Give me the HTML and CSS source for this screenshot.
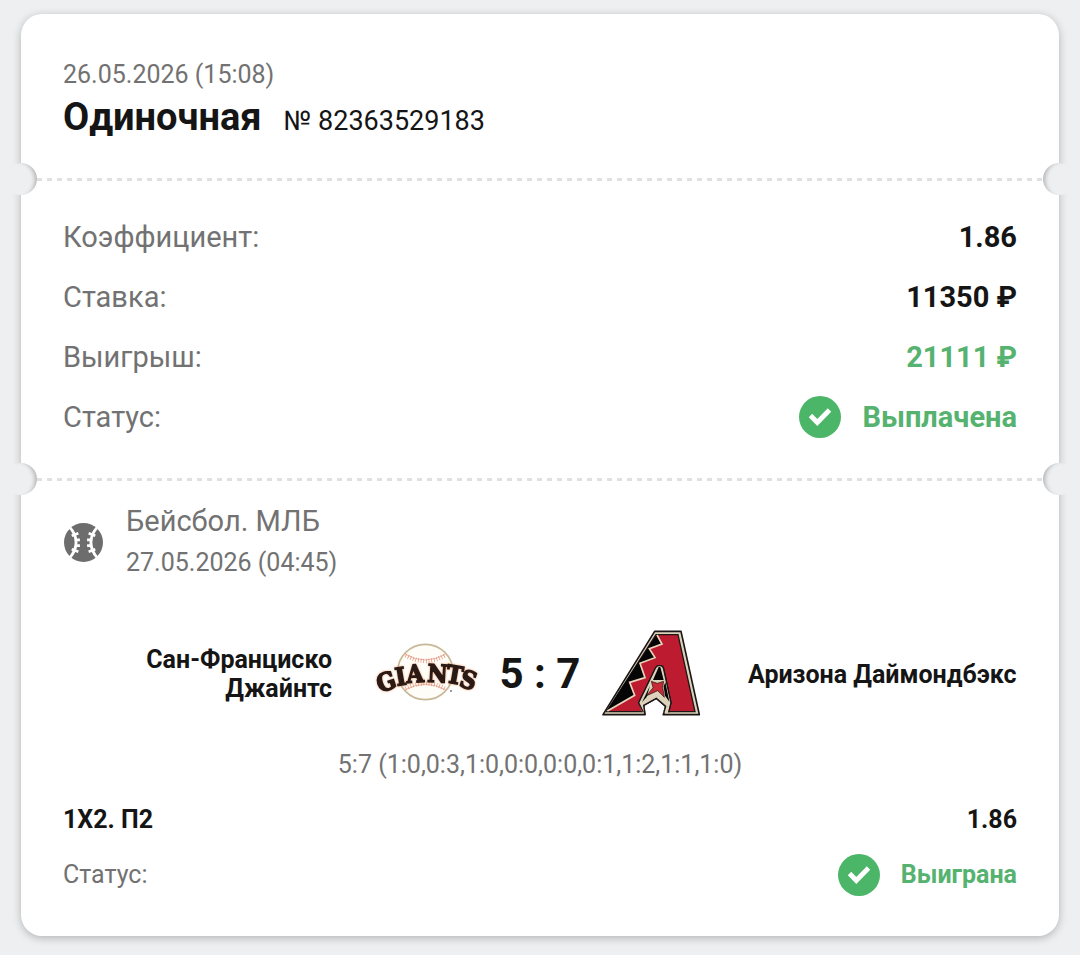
FILE: index.html
```html
<!DOCTYPE html>
<html lang="ru">
<head>
    <meta charset="UTF-8">
    <meta name="viewport" content="width=device-width, initial-scale=1">
    <title>Одиночная № 82363529183</title>
    <link rel="stylesheet" href="styles.css">
</head>
<body>
    <main class="ticket">
        <header class="ticket-header">
            <div class="date">26.05.2026 (15:08)</div>
            <div class="title-row">
                <h1>Одиночная</h1>
                <span class="number">№ 82363529183</span>
            </div>
        </header>

        <div class="divider"></div>

        <dl class="summary">
            <div class="row">
                <dt>Коэффициент:</dt>
                <dd>1.86</dd>
            </div>
            <div class="row">
                <dt>Ставка:</dt>
                <dd>11350 ₽</dd>
            </div>
            <div class="row">
                <dt>Выигрыш:</dt>
                <dd class="green">21111 ₽</dd>
            </div>
            <div class="row">
                <dt>Статус:</dt>
                <dd class="green status">
                    <svg class="check" viewBox="0 0 42 42" aria-hidden="true">
                        <circle cx="21" cy="21" r="21" fill="#4bb568"/>
                        <path d="M11.500 19.500l6.800 7L30.500 14" fill="none" stroke="#fff" stroke-width="4.800"/>
                    </svg>
                    Выплачена
                </dd>
            </div>
        </dl>

        <div class="divider"></div>

        <section class="event">
            <div class="league">
                <svg class="ball" viewBox="0 0 40 40" aria-hidden="true">
                    <circle cx="20" cy="20" r="19" fill="#6d6d6d"/>
                    <g fill="none" stroke="#fff">
                        <path d="M6 4.500C15 14 15 26 6 35.500M34 4.500C25 14 25 26 34 35.500" stroke-width="2.800"/>
                        <path d="M8.500 13.500l6.500-2.500M12 17.500h4.500M12 23h4.500M8.500 26.500l6.500 2.500M31.500 13.500l-6.500-2.500M28 17.500h-4.500M28 23h-4.500M31.500 26.500l-6.500 2.500" stroke-width="2.600"/>
                    </g>
                </svg>
                <div>
                    <h2>Бейсбол. МЛБ</h2>
                    <div class="date">27.05.2026 (04:45)</div>
                </div>
            </div>

            <div class="match">
                <div class="team home">Сан-Франциско Джайнтс</div>
                <div class="board">
                    <svg class="logo" viewBox="22 0 330 256" role="img" aria-label="Giants">
                        <circle cx="179" cy="122" r="83" fill="#fffdf8" stroke="#c8b897" stroke-width="5"/>
                        <g fill="none" stroke="#e38a72">
                            <path d="M119 69q60 34 120 0M119 175q60-32 120 0" stroke-width="2"/>
                            <path d="M120 72q59 34 118 0M120 172q59-32 118 0" stroke-width="13" stroke-dasharray="2 6"/>
                        </g>
                        <text class="giants" x="42 94 124 184 238 278" y="184 164 155 151 152 163" rotate="-18 -10 -4 3 10 18">GIANTS</text>
                        <circle cx="256" cy="179" r="3" fill="#777"/>
                    </svg>
                    <div class="score">5 : 7</div>
                    <svg class="logo" viewBox="21 31 330 256" role="img" aria-label="Diamondbacks">
                        <path d="M194 31h79l55 250H220l7-25-28-24-38 21 4 28H39z" fill="#ddd2ba" stroke="#1c1717" stroke-width="5" stroke-linejoin="round"/>
                        <path d="M198 41h66l51 231h-79l7-27-22-101q-2-10-9-10h-6q-6 0-10 8l-50 103 14 27H50z" fill="#bd1b30" stroke="#1c1717" stroke-width="4"/>
                        <path d="M199 42L48 272l85-49-15-39 46-14-15-43 45-17-17-27 38-14z" fill="#050505"/>
                        <path d="M201 42l15 27-38 14 17 27-45 17 15 43-46 14 15 39-82 47" fill="none" stroke="#e8d5b9" stroke-width="5"/>
                        <!-- inner frame of the emblem, open at the bottom -->
                        <path d="M205 135h7q6 0 8 9l22 101-8 30h-15l8-19-28-24-38 21 5 22h-9l-11-30 50-102q3-8 9-8z" fill="#ddd2ba"/>
                        <path d="M160 274l-14-29 50-103q4-8 10-8h6q7 0 9 10l22 101-7 29" fill="none" stroke="#1c1717" stroke-width="4"/>
                        <path d="M206 138h5l10 39h-32z" fill="#050505"/>
                        <path d="M184 181l18 6 19-6-3 17 5 31-20-20-33 15 19-24z" fill="#c72a35" stroke="#1c1717" stroke-width="2"/>
                        <path d="M226 184l12 58-13-18-4-28zM180 194l-24 50 14-16z" fill="#050505"/>
                        <path d="M165 281l-4-28 38-21 28 24-7 25" fill="none" stroke="#1c1717" stroke-width="4"/>
                    </svg>
                </div>
                <div class="team away">Аризона Даймондбэкс</div>
            </div>

            <div class="innings">5:7 (1:0,0:3,1:0,0:0,0:0,0:1,1:2,1:1,1:0)</div>

            <dl class="outcome">
                <div class="row">
                    <dt class="bet">1X2. П2</dt>
                    <dd>1.86</dd>
                </div>
                <div class="row">
                    <dt>Статус:</dt>
                    <dd class="green status">
                        <svg class="check" viewBox="0 0 42 42" aria-hidden="true">
                            <circle cx="21" cy="21" r="21" fill="#4bb568"/>
                            <path d="M11.500 19.500l6.800 7L30.500 14" fill="none" stroke="#fff" stroke-width="4.800"/>
                        </svg>
                        Выиграна
                    </dd>
                </div>
            </dl>
        </section>
    </main>
</body>
</html>
```

FILE: styles.css
```css
* {
    box-sizing: border-box;
}
body {
    margin: 0;
    padding: 14px 21px 19px;
    font-family: Roboto, "Liberation Sans", sans-serif;
    font-size: 25px;
    background: #eeeff1;
    color: #151515;
}
h1, h2, dl, dd {
    margin: 0;
}
.ticket {
    background: white;
    border-radius: 21px;
    box-shadow: 0 2px 8px rgba(0, 0, 0, 0.25);
}
.ticket-header {
    padding: 44px 42px 32px;
}
.date {
    line-height: 34px;
    color: #727272;
}
.title-row {
    display: flex;
    align-items: baseline;
    gap: 22px;
    line-height: 50px;
}
h1 {
    font-size: 38px;
    font-weight: 700;
}
.number {
    font-size: 27px;
}

/* perforation line with round cuts on both sides */
.divider {
    position: relative;
    height: 3px;
    margin: 0 16px;
    background: repeating-linear-gradient(90deg, #e0e0e0 0 5px, transparent 5px 10px);
}
.divider::before,
.divider::after {
    content: "";
    position: absolute;
    top: -15px;
    width: 32px;
    height: 32px;
    border-radius: 50%;
    background: #eeeff1;
}
.divider::before {
    left: -32px;
    box-shadow: inset -6px 1px 4px -4px rgba(0, 0, 0, 0.25);
}
.divider::after {
    right: -32px;
    box-shadow: inset 6px 1px 4px -4px rgba(0, 0, 0, 0.25);
}

.row {
    display: flex;
    justify-content: space-between;
    align-items: center;
}
dt {
    color: #727272;
}
dd {
    font-weight: 700;
}
.green {
    color: #55b26f;
}
.status {
    display: flex;
    align-items: center;
    gap: 21px;
}
.check {
    width: 42px;
    height: 42px;
}
.summary {
    padding: 26px 42px 31px;
    font-size: 29px;
}
.summary .row {
    height: 60px;
}

.event {
    padding: 20px 42px 34px;
}
.league {
    display: flex;
    align-items: center;
    gap: 22px;
}
.league .date,
h2 {
    line-height: 41px;
}
h2 {
    font-size: 29px;
    font-weight: 400;
    color: #727272;
}
.ball {
    width: 41px;
    height: 41px;
}
.match {
    display: grid;
    grid-template-columns: 1fr 334px 1fr;
    column-gap: 41px;
    align-items: center;
    margin-top: 48px;
    font-size: 25px;
    font-weight: 700;
    line-height: 29px;
}
.home {
    padding-left: 42px;
    text-align: right;
}
.away {
    white-space: nowrap;
}
.board {
    display: flex;
    align-items: center;
    justify-content: space-between;
}
.logo {
    width: 110px;
    height: 86px;
    overflow: visible;
}
.giants {
    font-family: "DejaVu Serif Condensed", "DejaVu Serif", serif;
    font-size: 74px;
    font-weight: 700;
    fill: #2a1a16;
    stroke: #2a1a16;
    stroke-width: 4px;
    filter: drop-shadow(0 0 3px #f0a070);
}
.score {
    font-size: 42px;
    line-height: 50px;
}
.innings {
    margin: 33px 0 12px;
    line-height: 30px;
    text-align: center;
    color: #727272;
}
.outcome .row {
    height: 55px;
}
.outcome .bet {
    font-weight: 700;
    color: #151515;
}
```
